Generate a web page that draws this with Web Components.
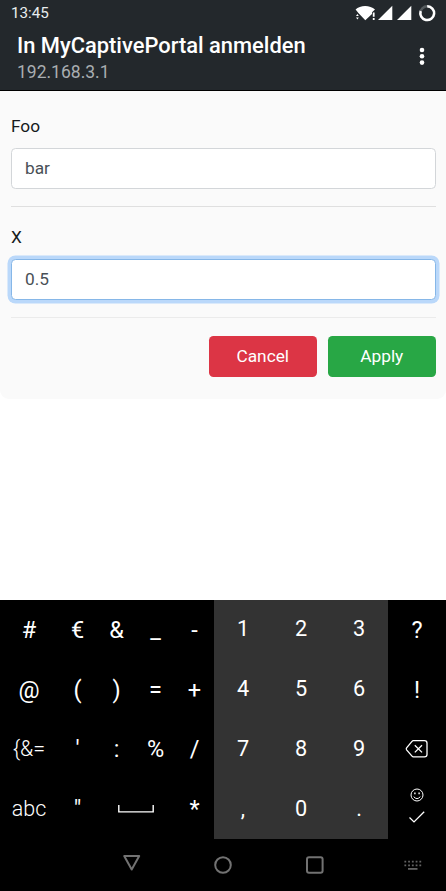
<!DOCTYPE html>
<html lang="de"><head><meta charset="utf-8"><title>In MyCaptivePortal anmelden</title>
<style>
html,body{margin:0;height:100%;background:#fff;overflow:hidden}
body{font-family:Roboto,sans-serif;color:#111}
</style></head><body>
<captive-screen></captive-screen>
<script>
const define=(name,markup,init)=>customElements.define(name,class extends HTMLElement{
  constructor(){super();this.attachShadow({mode:'open'}).innerHTML=markup;}
  connectedCallback(){if(init)init(this,this.shadowRoot);}
});

define('status-bar',`<style>
:host{display:flex;justify-content:space-between;height:27px;padding:0 9px 0 11px;box-sizing:border-box;color:#e9edee;font-size:15.2px;line-height:26px}
svg{display:block}
</style><span>13:45</span>
<svg width="84" height="27" viewBox="353 0 84 27" fill="#fff">
<path d="M355.6 9.6C360 4.9 370.2 4.9 375 9.6L372 12.3V14L365.3 20.3L358.6 13.2z"/>
<path d="M356 16L357.4 13.9 358.8 16zM356 17.4H358.8L357.4 19.4z"/>
<path d="M372.8 12.4H374.6V16.8H372.8zM372.8 18H374.6V20H372.8z"/>
<path d="M378 20L392.3 5.8V20zM397 20L411.3 5.8V20z"/>
<circle cx="427.2" cy="13.2" r="6.9" fill="none" stroke="#555b5e" stroke-width="2.5"/>
<path d="M427.2 6.3A6.9 6.9 0 1 1 420.7 11" fill="none" stroke="#fff" stroke-width="2.5"/>
</svg>`);

define('app-bar',`<style>
:host{display:flex;justify-content:space-between;height:64px;padding:0 20px 0 17px;box-sizing:border-box;border-bottom:1px solid #000}
h1{margin:5px 0 0;font-size:21.9px;line-height:28px;font-weight:500;color:#fff;white-space:nowrap}
p{margin:0;font-size:17.5px;line-height:24px;color:#a9aeb1}
svg{display:block;margin-top:19px}
</style><div><h1><slot></slot></h1><p><slot name="address"></slot></p></div>
<svg width="8" height="20" fill="#fff"><circle cx="4" cy="4" r="2.3"/><circle cx="4" cy="10.3" r="2.3"/><circle cx="4" cy="16.6" r="2.3"/></svg>`);

define('form-field',`<style>
:host{display:block;border-bottom:1px solid #dfdfdf;padding-bottom:17px}
label{display:block;font-size:17.3px;line-height:26px;margin-bottom:9px;color:#171a1c}
.box{height:41px;box-sizing:border-box;border:1px solid #d3d6d9;border-radius:4.5px;background:#fff;padding:0 13px;font-size:17.3px;line-height:39px;color:#495057}
:host([focused]) .box{border-color:#86b7e8;box-shadow:0 0 0 3.5px #bad8fa}
:host([focused]){border-color:#ebebeb}
</style><label></label><div class="box"><slot></slot></div>`,(h,s)=>{s.querySelector('label').textContent=h.getAttribute('label')});

define('action-button',`<style>
:host{display:block;width:108.5px;height:41px;border-radius:4.5px;box-sizing:border-box;text-align:center;color:#fff;font-size:17.3px;line-height:41px;background:#dc3545;border:0}
:host([kind=success]){background:#28a745}
</style><slot></slot>`);

define('portal-form',`<style>
:host{display:block;height:308px;box-sizing:border-box;padding:22px 10px 0 11px;background:#fafafa;border-radius:0 0 9px 9px}
form-field+form-field{margin-top:17px}
footer{display:flex;justify-content:flex-end;gap:10.5px;margin-top:18px}
</style><form-field label="Foo">bar</form-field><form-field label="X" focused>0.5</form-field>
<footer><action-button>Cancel</action-button><action-button kind="success">Apply</action-button></footer>`);

define('key-cap',`<style>
:host{display:flex;align-items:center;justify-content:center;color:#fff;font-size:23.5px;line-height:28px;white-space:nowrap}
:host([digit]){background:#333;font-size:21.7px;padding-bottom:1px}
:host([mode]){font-weight:300;font-size:21.5px}
:host([wide]){grid-column:span 2}
</style><slot></slot>`);

define('soft-keyboard',`<style>
:host{display:grid;height:239px;grid-template-columns:58px repeat(4,39px) repeat(3,58px) 58px;grid-template-rows:repeat(4,59.75px);background:#000}
svg{fill:none;stroke:#fff}
</style>`,(h,s)=>{
  const space='<svg width="36" height="9" fill="none" stroke="#fff"><path d="M.8 0V6.9H35.2V0" stroke-width="1.4"/></svg>';
  const del='<svg width="24" height="20" fill="none" stroke="#fff" stroke-width="1.3"><path d="M8.3 1.6H19.5Q22 1.6 22 4V15.5Q22 17.9 19.5 17.9H8.3Q7.6 17.9 7 17.2L1.6 10.8Q.9 9.8 1.6 8.8L7 2.3Q7.6 1.6 8.3 1.6zM9.8 6.2 17 13.4M17 6.2 9.8 13.4"/></svg>';
  const enter='<svg width="18" height="45" fill="none" stroke="#fff"><g stroke-width="1"><circle cx="9" cy="8" r="6"/><path d="M5.7 9.7Q9 13.5 12.3 9.7"/><path d="M6.9 5.4V7.3M11.1 5.4V7.3" stroke-width="1.4"/></g><path d="M1.5 30.5 6 34.9 16.2 24.7" stroke-width="1.3"/></svg>';
  const rows=[['#','€','&amp;','_','-','1','2','3','?'],['@','(',')','=','+','4','5','6','!'],
    ['{&amp;=',"'",':','%','/','7','8','9',del],['abc','"',space,'*',',','0','.',enter]];
  rows.forEach(r=>r.forEach((k,i)=>{
    const fromEnd=r.length-1-i,e=document.createElement('key-cap');
    if(fromEnd>0&&fromEnd<4)e.setAttribute('digit','');
    if(k==='abc'||k==='{&amp;=')e.setAttribute('mode','');
    if(k===space)e.setAttribute('wide','');
    e.innerHTML=k;s.append(e);
  }));
});

define('nav-bar',`<style>
:host{display:block;height:52px;background:#000}svg{display:block}
</style><svg width="446" height="52" viewBox="0 839 446 52" fill="none" stroke="#727272" stroke-width="2" stroke-linejoin="round">
<path d="M124.2 856H139.2L131.7 869.5z"/><circle cx="223" cy="865" r="7.8"/><rect x="307" y="857.2" width="15.6" height="15.6" rx="2"/>
<g stroke="#626262" stroke-width="1.8"><path d="M404.4 861.6H421.5M404.4 865.4H421.5" stroke-dasharray="1.8 1.95"/><path d="M408 868.9H417.5"/></g></svg>`);

define('captive-screen',`<style>
:host{display:flex;flex-direction:column;width:446px;height:891px;background:#fff}
header{background:#23282c}
soft-keyboard{margin-top:auto}
</style><header><status-bar></status-bar><app-bar>In MyCaptivePortal anmelden<span slot="address">192.168.3.1</span></app-bar></header>
<portal-form></portal-form><soft-keyboard></soft-keyboard><nav-bar></nav-bar>`);
</script></body></html>
